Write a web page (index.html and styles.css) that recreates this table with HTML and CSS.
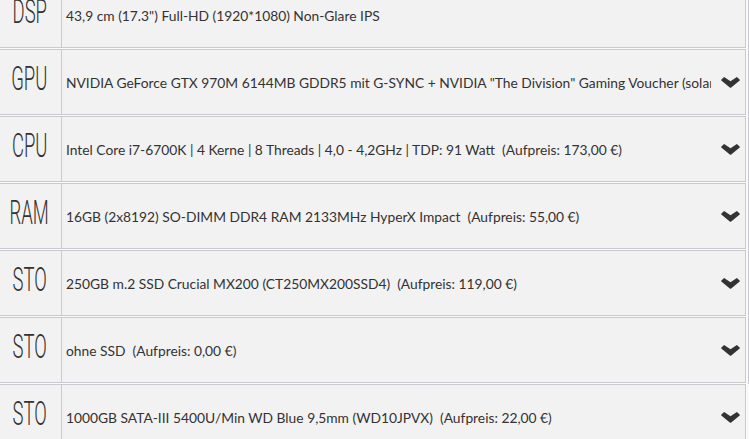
FILE: index.html
```html
<!DOCTYPE html>
<html>
<head>
<meta charset="utf-8">
<link rel="stylesheet" href="styles.css">
</head>
<body>
<div class="frame">
  <div class="list">
    <div class="row">
      <div class="label"><span>DSP</span></div>
      <div class="value">43,9 cm (17.3") Full-HD (1920*1080) Non-Glare IPS</div>
      <div class="arrow empty"></div>
    </div>
    <div class="row">
      <div class="label"><span>GPU</span></div>
      <div class="value">NVIDIA GeForce GTX 970M 6144MB GDDR5 mit G-SYNC + NVIDIA "The Division" Gaming Voucher (solange Vorrat reicht)</div>
      <div class="arrow"><svg width="19" height="11" viewBox="0 0 19 11"><path d="M0.2 2.8 L2.8 0.2 Q3.1 0 3.5 0.2 L9.5 4.2 L15.5 0.2 Q15.9 0 16.2 0.2 L18.8 2.8 Q19 3.2 18.7 3.5 L10.2 10.6 Q9.5 11 8.8 10.6 L0.3 3.5 Q0 3.2 0.2 2.8 Z"/></svg></div>
    </div>
    <div class="row">
      <div class="label"><span>CPU</span></div>
      <div class="value">Intel Core i7-6700K | 4 Kerne | 8 Threads | 4,0 - 4,2GHz | TDP: 91 Watt  (Aufpreis: 173,00 €)</div>
      <div class="arrow"><svg width="19" height="11" viewBox="0 0 19 11"><path d="M0.2 2.8 L2.8 0.2 Q3.1 0 3.5 0.2 L9.5 4.2 L15.5 0.2 Q15.9 0 16.2 0.2 L18.8 2.8 Q19 3.2 18.7 3.5 L10.2 10.6 Q9.5 11 8.8 10.6 L0.3 3.5 Q0 3.2 0.2 2.8 Z"/></svg></div>
    </div>
    <div class="row">
      <div class="label"><span>RAM</span></div>
      <div class="value">16GB (2x8192) SO-DIMM DDR4 RAM 2133MHz HyperX Impact  (Aufpreis: 55,00 €)</div>
      <div class="arrow"><svg width="19" height="11" viewBox="0 0 19 11"><path d="M0.2 2.8 L2.8 0.2 Q3.1 0 3.5 0.2 L9.5 4.2 L15.5 0.2 Q15.9 0 16.2 0.2 L18.8 2.8 Q19 3.2 18.7 3.5 L10.2 10.6 Q9.5 11 8.8 10.6 L0.3 3.5 Q0 3.2 0.2 2.8 Z"/></svg></div>
    </div>
    <div class="row">
      <div class="label"><span>STO</span></div>
      <div class="value">250GB m.2 SSD Crucial MX200 (CT250MX200SSD4)  (Aufpreis: 119,00 €)</div>
      <div class="arrow"><svg width="19" height="11" viewBox="0 0 19 11"><path d="M0.2 2.8 L2.8 0.2 Q3.1 0 3.5 0.2 L9.5 4.2 L15.5 0.2 Q15.9 0 16.2 0.2 L18.8 2.8 Q19 3.2 18.7 3.5 L10.2 10.6 Q9.5 11 8.8 10.6 L0.3 3.5 Q0 3.2 0.2 2.8 Z"/></svg></div>
    </div>
    <div class="row">
      <div class="label"><span>STO</span></div>
      <div class="value">ohne SSD  (Aufpreis: 0,00 €)</div>
      <div class="arrow"><svg width="19" height="11" viewBox="0 0 19 11"><path d="M0.2 2.8 L2.8 0.2 Q3.1 0 3.5 0.2 L9.5 4.2 L15.5 0.2 Q15.9 0 16.2 0.2 L18.8 2.8 Q19 3.2 18.7 3.5 L10.2 10.6 Q9.5 11 8.8 10.6 L0.3 3.5 Q0 3.2 0.2 2.8 Z"/></svg></div>
    </div>
    <div class="row">
      <div class="label"><span>STO</span></div>
      <div class="value">1000GB SATA-III 5400U/Min WD Blue 9,5mm (WD10JPVX)  (Aufpreis: 22,00 €)</div>
      <div class="arrow"><svg width="19" height="11" viewBox="0 0 19 11"><path d="M0.2 2.8 L2.8 0.2 Q3.1 0 3.5 0.2 L9.5 4.2 L15.5 0.2 Q15.9 0 16.2 0.2 L18.8 2.8 Q19 3.2 18.7 3.5 L10.2 10.6 Q9.5 11 8.8 10.6 L0.3 3.5 Q0 3.2 0.2 2.8 Z"/></svg></div>
    </div>
  </div>
</div>
</body>
</html>
```

FILE: styles.css
```css
html, body {
  margin: 0;
  padding: 0;
  background: #fafafa;
  overflow: hidden;
}
body {
  width: 749px;
  height: 439px;
  font-family: Lato, "Open Sans", sans-serif;
  color: #333;
}
.frame {
  position: relative;
  width: 749px;
  height: 439px;
}
.frame::after {
  content: "";
  position: absolute;
  right: 0;
  top: 0;
  width: 1px;
  height: 402px;
  background: #c9c9cf;
}
.list {
  margin-top: -18px;
  margin-left: -1px;
  width: 747px;
}
.row {
  display: flex;
  align-items: center;
  height: 64px;
  border: 1px solid #c9c9cf;
  background: #f2f2f2;
  margin-bottom: 1px;
}
.label {
  flex: 0 0 62px;
  width: 62px;
  height: 100%;
  border-right: 1px solid #c9c9cf;
  display: flex;
  align-items: center;
  justify-content: center;
  box-sizing: border-box;
  padding-right: 2px;
  padding-bottom: 7px;
  overflow: hidden;
}
.label span {
  display: inline-block;
  font-family: Roboto, sans-serif;
  font-weight: 300;
  font-size: 33px;
  line-height: 1;
  transform: scaleX(0.56);
  color: #333;
}
.value {
  flex: 1 1 auto;
  min-width: 0;
  padding-left: 4px;
  font-size: 13.8px;
  white-space: pre;
  overflow: hidden;
  margin-right: 10px;
  padding-top: 1px;
}
.arrow {
  flex: 0 0 19px;
  width: 19px;
  margin-right: 5px;
  display: flex;
  align-items: center;
}
.arrow svg {
  display: block;
  fill: #333;
}
```
